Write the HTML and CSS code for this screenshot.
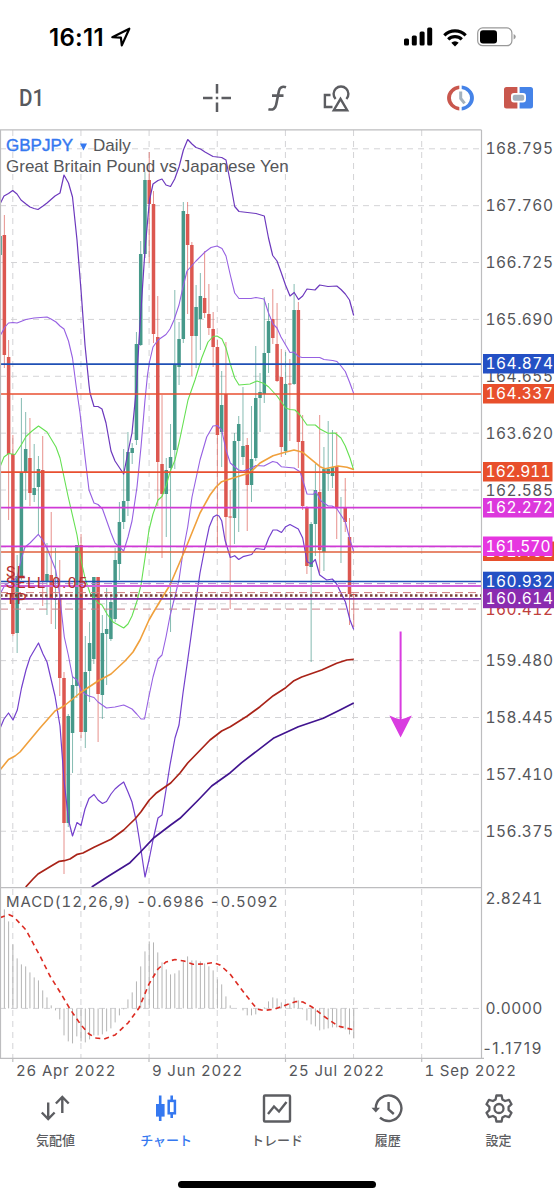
FILE: index.html
```html
<!DOCTYPE html>
<html lang="ja">
<head>
    <meta charset="UTF-8">
    <meta name="viewport" content="width=device-width, initial-scale=1.0">
    <title>GBPJPY Daily</title>
    <link rel="stylesheet" href="styles.css">
</head>
<body>

    <!-- Status bar -->
    <div class="status-bar">
        <div class="status-left">
            <span class="time">16:11</span>
            <svg class="location" width="20" height="20" viewBox="0 0 20 20">
                <path d="M1.3 10.2 L18.3 1.7 L10.8 18.4 L9.9 10.6 Z" fill="none" stroke="#000" stroke-width="2.2" stroke-linejoin="round"/>
            </svg>
        </div>
        <div class="status-right">
            <svg width="29" height="20" viewBox="0 0 29 20">
                <rect x="0" y="11.5" width="5" height="7" rx="1.5"/>
                <rect x="7.8" y="8.5" width="5" height="10" rx="1.5"/>
                <rect x="15.6" y="4.5" width="5" height="14" rx="1.5"/>
                <rect x="23.2" y="0.5" width="5" height="18" rx="1.5"/>
            </svg>
            <svg width="24" height="19" viewBox="0 0 24 19">
                <g fill="none" stroke="#000" stroke-width="3.1">
                    <path d="M1.3 7.3 A15.2 15.2 0 0 1 22.7 7.3"/>
                    <path d="M5.2 11.4 A9.6 9.6 0 0 1 18.8 11.4"/>
                </g>
                <path d="M12 18.4 L8.3 14.7 A5.3 5.3 0 0 1 15.7 14.7 Z"/>
            </svg>
            <svg width="40" height="20" viewBox="0 0 40 20">
                <rect x="0.7" y="0.9" width="34.2" height="17.8" rx="5" fill="#fff" stroke="#999" stroke-width="1.2"/>
                <rect x="3" y="3.2" width="17" height="13.2" rx="3"/>
                <path d="M36.6 7 Q38.8 8 38.8 9.8 Q38.8 11.6 36.6 12.6 Z" fill="#999"/>
            </svg>
        </div>
    </div>

    <!-- Toolbar -->
    <div class="toolbar">
        <span class="timeframe">D1</span>
        <div class="tools">
            <svg width="28" height="28" viewBox="0 0 28 28">
                <path d="M14 0 V9.5 M14 18.5 V28 M0 14 H9.5 M18.5 14 H28 M12.8 14 H15.2" stroke="#5c5d61" stroke-width="2.5"/>
            </svg>
            <svg width="20" height="28" viewBox="0 0 20 28">
                <path d="M19 3.2 C15 1.8 12.6 3.6 11.9 7 L9.2 20.5 C8.4 24.6 6 26.4 1.4 25.2 M5 11.6 H16.5" fill="none" stroke="#5c5d61" stroke-width="2.6"/>
            </svg>
            <svg width="27" height="28" viewBox="0 0 27 28">
                <g fill="none" stroke="#5c5d61" stroke-width="2.4">
                    <path d="M12.6 15 A7.4 7.4 0 1 1 23.4 15"/>
                    <path d="M7.5 11 H1.9 V23 H9.5"/>
                    <path d="M17.5 14.8 L24.2 26.2 H10.8 Z"/>
                </g>
            </svg>
        </div>
        <div class="trade-tools">
            <svg width="29" height="26" viewBox="0 0 29 26">
                <path d="M13.3 0.5 A14 12.6 0 0 0 13.3 25.5 V22.1 A9.8 9.2 0 0 1 13.3 3.9 Z" fill="#c9574d"/>
                <path d="M15.7 0.5 A14 12.6 0 0 1 15.7 25.5 V22.1 A9.8 9.2 0 0 0 15.7 3.9 Z" fill="#4583e8"/>
                <path d="M14.7 6.5 V13.4 L18.6 18.4" fill="none" stroke="#a4b2be" stroke-width="3"/>
            </svg>
            <svg width="29" height="22" viewBox="0 0 29 22">
                <path d="M2.5 0 H13.4 V6 H10 Q7 6 7 9 V12 Q7 15.5 10 15.5 H13.4 V21.5 H2.5 Q0 21.5 0 19 V2.5 Q0 0 2.5 0" fill="#c9574d"/>
                <path d="M26.5 0 H15.6 V6 H19 Q22 6 22 9 V12 Q22 15.5 19 15.5 H15.6 V21.5 H26.5 Q29 21.5 29 19 V2.5 Q29 0 26.5 0" fill="#4583e8"/>
                <rect x="8.8" y="7.8" width="11.4" height="6" rx="2" fill="#a4b2be"/>
            </svg>
        </div>
    </div>

    <!-- Chart -->
    <svg class="chart" viewBox="0 129 554 956">
        <defs>
            <clipPath id="plot"><rect x="0" y="130" width="481" height="757"/></clipPath>
        </defs>
        <g id="grid" class="grid"></g>
        <g clip-path="url(#plot)">
            <g id="candles"></g>
            <g id="curves" class="curves"></g>
            <g id="levels"></g>
        </g>
        <g class="order">
            <text x="6" y="577">SL</text>
            <text x="6" y="588">SELL 0.05</text>
            <text x="6" y="604">TP</text>
        </g>

        <g class="arrow">
            <path d="M400.6 631.5 V722" stroke="#d93ce0" stroke-width="2"/>
            <path d="M389.4 715.5 Q396 718.5 400.6 719.5 Q405.2 718.5 411.8 715.5 L400.6 737.5 Z" fill="#d93ce0"/>
        </g>

        <g id="macd"></g>

        <path class="frame" d="M0.5 130 V1058 M0 129.9 H481.5 M481.5 130 V1058 M0 887.6 H481.5 M0 1058.4 H484 M12.8 1058 V1062 M149 1058 V1062 M285.5 1058 V1062 M421.7 1058 V1062"/>

        <g class="title">
            <text x="6" y="151" class="symbol">GBPJPY</text>
            <path d="M80 143.5 H87 L83.5 150.5 Z" fill="#3578f0"/>
            <text x="93" y="151">Daily</text>
            <text x="6" y="172">Great Britain Pound vs Japanese Yen</text>
        </g>
        <text x="6" y="907" class="macd-title">MACD(12,26,9) -0.6986 -0.5092</text>

        <g id="prices" class="axis"></g>
        <g class="axis">
            <text x="485.5" y="903.5">2.8241</text>
            <text x="485.5" y="1014">0.0000</text>
            <text x="483.5" y="1054" class="low">-1.1719</text>
        </g>
        <g class="dates">
            <text x="16" y="1076">26 Apr 2022</text>
            <text x="152" y="1076">9 Jun 2022</text>
            <text x="288.5" y="1076">25 Jul 2022</text>
            <text x="424.5" y="1076">1 Sep 2022</text>
        </g>
    </svg>

    <!-- Tabs -->
    <nav class="tabs">
        <a class="tab">
            <svg width="30" height="30" viewBox="0 0 30 30">
                <path d="M8.2 9.5 V26 M1.8 19.5 L8.2 26 L14.6 19.5 M22.3 20 V4 M15.9 10.5 L22.3 4 L28.7 10.5" fill="none" stroke="currentColor" stroke-width="2.4"/>
            </svg>
            <span>気配値</span>
        </a>
        <a class="tab active">
            <svg width="30" height="30" viewBox="0 0 30 30">
                <path d="M9.2 2.5 V28 M20.7 2.5 V7 M20.7 20 V25" stroke="currentColor" stroke-width="2.6"/>
                <rect x="5" y="11" width="8.6" height="12.6" fill="currentColor"/>
                <rect x="17.7" y="7.9" width="6.2" height="12.4" fill="none" stroke="currentColor" stroke-width="2.5"/>
            </svg>
            <span>チャート</span>
        </a>
        <a class="tab">
            <svg width="30" height="30" viewBox="0 0 30 30">
                <rect x="2" y="2.5" width="26" height="26" rx="1" fill="none" stroke="currentColor" stroke-width="2.4"/>
                <path d="M6 21 L12 13.5 L17 18.5 L24.5 9" fill="none" stroke="currentColor" stroke-width="2.4"/>
            </svg>
            <span>トレード</span>
        </a>
        <a class="tab">
            <svg width="34" height="30" viewBox="0 0 34 30">
                <path d="M4.8 15.5 A12.8 12.8 0 1 1 9 24.7" fill="none" stroke="currentColor" stroke-width="2.4"/>
                <path d="M0.5 14.8 H9 L4.8 19.5 Z" fill="currentColor"/>
                <path d="M17.6 9 V16.5 L22.8 21" fill="none" stroke="currentColor" stroke-width="2.4"/>
            </svg>
            <span>履歴</span>
        </a>
        <a class="tab">
            <svg width="30" height="30" viewBox="0 0 30 30">
                <path fill="none" stroke="currentColor" stroke-width="2.3" stroke-linejoin="round" d="M12.4 2.5 H17.6 L18.4 6.4 L21.1 8 L25 6.8 L27.5 11.2 L24.6 13.9 V17.1 L27.5 19.8 L25 24.2 L21.1 23 L18.4 24.6 L17.6 28.5 H12.4 L11.6 24.6 L8.9 23 L5 24.2 L2.5 19.8 L5.4 17.1 V13.9 L2.5 11.2 L5 6.8 L8.9 8 L11.6 6.4 Z"/>
                <circle cx="15" cy="15.5" r="4.5" fill="none" stroke="currentColor" stroke-width="2.3"/>
            </svg>
            <span>設定</span>
        </a>
    </nav>
    <div class="home-indicator"></div>

    <script src="chart.js"></script>
</body>
</html>
```

FILE: styles.css
```css
body {
    margin: 0;
    height: 1200px;
    display: flex;
    flex-direction: column;
    background-color: #fff;
    color: #58595d;
    font-family: Inter, "Noto Sans CJK JP", sans-serif;
    overflow: hidden;
}

svg {
    display: block;
}

/* Status bar */
.status-bar {
    height: 72px;
    box-sizing: border-box;
    padding: 2px 37px 0 49px;
    display: flex;
    justify-content: space-between;
    align-items: center;
    color: #000;
}

.status-left {
    display: flex;
    align-items: center;
    gap: 7px;
}

.status-right {
    display: flex;
    align-items: center;
    gap: 10px;
}

.time {
    font-size: 24px;
    font-weight: 600;
    letter-spacing: 0.3px;
}

/* Toolbar */
.toolbar {
    height: 57px;
    box-sizing: border-box;
    padding: 0 21px 5px 19px;
    display: flex;
    align-items: center;
}

.timeframe {
    width: 184px;
    font-family: Roboto, sans-serif;
    font-size: 23.5px;
    font-weight: 500;
    transform: scaleX(0.88);
    transform-origin: left;
}

.tools {
    display: flex;
    align-items: center;
    gap: 36px;
}

.trade-tools {
    display: flex;
    align-items: center;
    gap: 29px;
    margin-left: auto;
}

/* Chart */
.chart {
    width: 554px;
    height: 956px;
    flex: none;
}

.chart text {
    fill: #55565a;
    white-space: pre;
}

.grid {
    stroke: #d3d3d6;
    stroke-width: 1;
    stroke-dasharray: 6 5;
}

.frame {
    fill: none;
    stroke: #bdbdbf;
    stroke-width: 1.2;
}

.curves {
    fill: none;
    stroke-linejoin: round;
}

.up {
    fill: #46998a;
    stroke: #46998a;
}

.down {
    fill: #dc5750;
    stroke: #dc5750;
}

.wick {
    stroke-width: 1;
    opacity: 0.65;
}

.body {
    stroke: none;
}

.bar {
    stroke: #b4b4b4;
    stroke-width: 1;
}

.signal {
    fill: none;
    stroke: #dc2b22;
    stroke-width: 1.6;
    stroke-dasharray: 5 4;
}

.chart .title text {
    font-family: "Liberation Sans", Arial, sans-serif;
    font-size: 17px;
}

.chart .title .symbol {
    fill: #3578f0;
    stroke: #3578f0;
    stroke-width: 0.4;
}

.macd-title {
    font-size: 15px;
    font-variant-numeric: tabular-nums;
    letter-spacing: 0.9px;
}

.axis {
    font-size: 15.5px;
    font-variant-numeric: tabular-nums;
    letter-spacing: 0.5px;
}

.axis .low {
    font-variant-numeric: normal;
    letter-spacing: 1.7px;
}

.dates {
    font-size: 15px;
    font-variant-numeric: tabular-nums;
    letter-spacing: 0.8px;
}

.chart .axis .tag {
    fill: #fff;
}

.chart .axis .narrow {
    letter-spacing: 0.1px;
}

.chart .axis .bid {
    fill: #c0403c;
}

.chart .order text {
    fill: #b5302f;
    font-family: Roboto, sans-serif;
    font-size: 15.5px;
    letter-spacing: 1.5px;
}

/* Tabs */
.tabs {
    display: flex;
    height: 96px;
    flex: none;
}

.tab {
    flex: 1;
    display: flex;
    flex-direction: column;
    align-items: center;
    padding-top: 8px;
    color: #5c5d61;
}

.tab span {
    margin-top: 7px;
    font-family: "Noto Sans CJK JP", sans-serif;
    font-size: 13px;
    font-weight: 500;
    line-height: 20px;
}

.tab.active {
    color: #3578f0;
}

.home-indicator {
    width: 198px;
    height: 7px;
    flex: none;
    margin: 0 auto;
    border-radius: 4px;
    background-color: #000;
}
```

FILE: chart.js
```js
const NS = 'http://www.w3.org/2000/svg';
const STEP = 4.261;

function add(parent, tag, attrs, text) {
    const el = document.createElementNS(NS, tag);
    for (const key in attrs) el.setAttribute(key, attrs[key]);
    if (text) el.textContent = text;
    parent.appendChild(el);
    return el;
}

function line(parent, x1, y1, x2, y2, attrs) {
    return add(parent, 'line', Object.assign({ x1, y1, x2, y2 }, attrs));
}

// Grid
const grid = document.getElementById('grid');
for (let i = 0; i < 13; i++) {
    const y = 148.8 + i * 56.87;
    line(grid, 0, y, 484, y);
}
for (let i = 0; i < 7; i++) {
    const x = 12.8 + i * 68.15;
    line(grid, x, 130, x, 1058);
}
line(grid, 0, 1008.4, 484, 1008.4);

// Candles: direction, high, body top, body bottom, low
const candles = [
    ['u', 236, 236, 255, 255], ['d', 215, 235, 355, 368], ['d', 340, 357, 454, 520], ['d', 435, 454, 634, 636],
    ['u', 555, 576, 633, 653], ['u', 398, 472, 576, 580], ['u', 412, 449, 472, 500], ['d', 418, 458, 493, 506],
    ['u', 444, 488, 495, 502], ['u', 456, 469, 487, 535], ['d', 436, 470, 581, 606], ['u', 543, 574, 581, 615],
    ['d', 512, 575, 599, 624], ['u', 548, 599, 600, 629], ['d', 560, 599, 678, 696], ['d', 672, 678, 823, 874],
    ['u', 714, 716, 823, 827], ['u', 676, 685, 733, 773], ['u', 545, 545, 686, 698], ['d', 534, 545, 732, 738],
    ['u', 636, 672, 732, 748], ['u', 622, 643, 671, 702], ['u', 577, 577, 659, 664], ['d', 577, 577, 694, 742],
    ['u', 615, 633, 695, 719], ['u', 588, 629, 634, 685], ['u', 597, 602, 639, 641], ['u', 548, 560, 619, 622],
    ['u', 502, 522, 564, 580], ['u', 449, 501, 522, 529], ['u', 432, 452, 501, 516], ['u', 443, 448, 453, 464],
    ['u', 332, 344, 440, 445], ['u', 241, 254, 345, 346], ['u', 172, 180, 254, 258], ['d', 152, 180, 204, 263],
    ['d', 191, 204, 334, 343], ['d', 296, 337, 462, 506], ['d', 395, 464, 494, 558], ['u', 458, 470, 494, 537],
    ['u', 424, 457, 468, 632], ['u', 290, 364, 450, 469], ['u', 322, 339, 367, 385], ['u', 202, 211, 339, 343],
    ['d', 202, 214, 245, 314], ['d', 242, 245, 336, 376], ['u', 285, 307, 336, 368], ['u', 273, 296, 319, 350],
    ['d', 251, 298, 313, 318], ['d', 284, 314, 328, 335], ['d', 312, 329, 347, 367], ['d', 340, 347, 435, 547],
    ['u', 371, 405, 432, 467], ['d', 342, 394, 517, 547], ['d', 490, 516.5, 517.5, 609], ['u', 433, 441, 518, 544],
    ['u', 416, 424, 441, 532], ['u', 387, 446, 457, 465], ['d', 438, 445, 485, 531], ['u', 406, 459, 485, 502],
    ['u', 346, 398, 458, 461], ['u', 373, 392, 398, 432], ['u', 297, 353, 394, 403], ['u', 303, 321, 353, 373],
    ['d', 289, 319, 338, 344], ['d', 303, 344, 381, 382], ['d', 349, 377, 447, 457], ['u', 352, 384, 451, 455],
    ['d', 359, 383.5, 384.5, 441], ['u', 284, 310, 384, 385], ['d', 302, 310, 442, 468], ['d', 415, 441, 506, 510],
    ['d', 506, 508, 566, 574], ['u', 522, 524, 567, 662], ['u', 464, 490, 524, 556], ['d', 415, 492, 550, 573],
    ['u', 447, 469, 552, 571], ['u', 421, 469, 474, 491], ['u', 430, 467, 476, 488], ['d', 432, 467, 507, 539],
    ['u', 497, 507, 508, 563], ['d', 478, 508, 522, 532], ['d', 518, 537, 594, 625], ['d', 594, 594, 595, 627]
];

const candleGroup = document.getElementById('candles');
candles.forEach(([dir, high, top, bottom, low], i) => {
    const x = i * STEP + 0.1;
    const cls = dir === 'u' ? 'up' : 'down';
    line(candleGroup, x, high, x, low, { class: 'wick ' + cls });
    add(candleGroup, 'rect', { x: x - 1.75, y: top, width: 3.5, height: bottom - top, class: 'body ' + cls });
});

// Bollinger bands and moving averages
const curves = [
    ['#65e052', 1.1, '0,467 4,457 8.7,453.5 15,454.5 21.5,444.5 26,436.5 32,431 38.5,426 47,432 56,447 60,458 68,496 77,535 81,560 85,578 90,593 98,603 102,605 107,614 113,622 123.7,628 128,624 132,616 137,601 141,585 145,558 149,530 153,514 158,500 162,496.5 166,486 170,472 175,460 179,443 188,400 195,380 201.7,358 208,342 213,336.5 217,336 222,339 226,348 230,363 234.7,378 239,385 250,384 257,381 264,383.5 268.7,387 277,396 285.7,408 290,409.5 295,410 300,415 307,425 315.3,425 320,429 328,433.3 335,433 341,438 345.3,446 350,458 353.7,470'],
    ['#9660e2', 1.1, '0,336 5,327 8.5,323 13,322.5 17,323 26,319.5 34,318 47,317 51,319 56,322 60,326 64,329 68.5,341 72.5,358 76,385 80,413 85,457 89,490 94,503 98,504.5 102.5,509 111,533 115,543 123.7,551 128,537 132,521 137,487 141,447 145,400 147.5,375 149.5,362 153,347 158,340 166,334.5 170,329 174,320 179,305 183,287 187,271 196,261 205,252 211,247.5 217,246 222,248.5 226,256 230.3,275 234.7,293 239,298.5 251,298.5 256,297.5 264,299 268.5,313 273,324 277,328 281,337 290,352.5 294,352 298.5,356.5 302,357.5 319.7,357.5 324,359.5 332.7,360.5 337,361.5 341,366 345.3,371.5 349.5,382 353.7,393.5'],
    ['#9660e2', 1.1, '0,594 5,585 10,582 17,578 21.5,558 25,547 30,543 38.3,534.3 42.7,540 47,548 55.7,570 59,590 64.3,637 68.3,655 72.5,676.7 77,680 81,690 85,694 89,696 94,697.5 98,702 106.5,708 115,707 123.7,705 128,707 132,709 136.7,714 141,719 144.5,719 149,696 153,677 158,659 162,655 166,637 170,616 179,580 183.3,550 187.7,527 192,497 200,460 206.7,437 213,426 217.3,425.5 221.7,430 226,450 230.3,463 238.5,470 243,471 251.7,468 256,465.5 264,466 272.7,461.5 277,462.5 281.3,466.7 294,468 300,471.7 302.7,480 307,494 313.5,494.3 315.5,491 321,501 328.3,506 332,506 336.7,508.5 345.3,521.7 350,540 353.7,551.5'],
    ['#6c38bd', 1.2, '0,204 4,196 8.5,193.5 12.7,190.5 17,194 21,200 26,204 30,207 34,208.5 38,209.5 43,206 47,203 51,199.5 55,196 60,193 64,175 68.5,183 72.5,197 77,240 81,290 85,345 89,385 90,393 94,406.5 98,406.5 102,409 106,423 111,451 115,461 119,467 123.7,474 128,452 132,433 136.7,385 139,340 145,250 149.5,200 153,184 158,180.5 162,179 166,185 170.5,186.5 174.7,179 179,167 183.4,150 187.7,139.5 192,144 196,147.5 200.5,149 205,152 213,156.5 221.7,157.5 226,160 230.3,182 234.7,206.5 239,211.5 256,213.5 264.3,216 268.5,238 272.7,255.5 277,261 281,272 285.5,285 290,296 294.2,292.5 298.5,299.5 302.7,296 307,289 315,290 319.7,285 328,286.5 336.8,286 341,289.5 345.3,294 349.5,300 353.7,315.5'],
    ['#7440cd', 1.2, '0,728.5 4,719 8.5,713 13,720 17.3,710 21.5,688 26,670 30,657.5 38.5,643 43,654 47,662 55,696 60,726 64,780 68.5,820 72.5,836 77,822.5 81,825.5 85,809 89,798.5 94,794.5 98,800 102.5,803.5 106.5,801.5 111,794 115,789 119,785.5 123.7,782 128,792 132,802 136.7,823 141,850 145,877 149,860 153,840 158,818 162,815 166,790 170,765 175,738 179,725 183,693 187,665 190.5,640 195,607 200,573 205,547 209.3,526.7 213.3,517 216.7,515 219,516 221.7,520.7 225,540 230.3,557.5 234.7,555.7 238.7,559.5 243,556.7 251.7,554.5 256,548.5 264.3,549.5 268.7,538 273,530 277,530 281.5,532.5 285.7,526.7 290,524.5 298.3,529 302.7,538 307,561.7 311.3,563.7 315.3,559.5 319.7,575 326.7,580 332.3,579 336.7,584 341,593 345.3,601.7 350,620 353.7,629.5'],
    ['#f0a03c', 1.6, '0,770 8.5,759.5 15,756 20,752 40,728 55,711 64,706 80,693 98,681 111,674 125,661 133,652 140,640 149,620 153,613 165,593 170,585 185,550 200,513 210,495 216,487 221.7,481.7 230,479 250,472.7 260,463 273,455.7 285,452.3 294,450 302.7,452.3 310,458.3 320,466.7 325,468.7 338,466 347,467.3 353.7,469.5'],
    ['#a92318', 1.7, '25.7,887 33,879 38,874 50,866.7 59.3,861.3 64.3,860.7 70,859 77.3,854.3 83,853 94,847.3 111,839.3 123.7,830 135,819 141,811.7 149.3,800 156.7,792.7 170.7,783 180,773 187.7,763 210,740 221.7,731 230.3,726.7 247.3,716 260,706.7 273.3,695.7 285.7,687.7 294,680.7 301.7,677 321.7,670 336.7,663.3 346.7,660 353.7,659.3'],
    ['#41148f', 1.7, '91.7,887 106.7,877.3 130,862.7 140,852.5 153.3,838.3 170.7,825 180,818.3 198.3,800 211.7,786 230.3,772.7 241.7,762.7 273.3,738.3 298.3,726.7 323.3,718.3 340,710 353.7,703']
];

const curveGroup = document.getElementById('curves');
curves.forEach(([color, width, points]) => {
    add(curveGroup, 'polyline', { points, stroke: color, 'stroke-width': width });
});

// Horizontal levels: y, color, width, dash
const levels = [
    [364.2, '#1f50b5', 1.7], [394, '#e84f30', 1.7], [472.2, '#e84f30', 1.7],
    [507.6, '#cf3ad6', 1.8], [546.3, '#cf3ad6', 1.8], [552, '#e0603c', 1.7],
    [592.6, '#cf7f80', 1, '8 5'], [609.1, '#c98088', 1, '8 5'],
    [581.5, '#1f50b5', 1.7], [583.6, '#b77fd0', 1, '8 5'], [586, '#d060dc', 1.8],
    [595.5, '#7a4038', 2.4, '2.5 2.5'], [598.8, '#7a2ca5', 1.7]
];

const levelGroup = document.getElementById('levels');
levels.forEach(([y, color, width, dash]) => {
    line(levelGroup, 0, y, 481, y, { stroke: color, 'stroke-width': width, 'stroke-dasharray': dash || 'none' });
});

// Price axis
const prices = document.getElementById('prices');
const labels = ['168.795', '167.760', '166.725', '165.690', '164.655', '163.620', '162.585', '', '', '159.480', '158.445', '157.410', '156.375'];
labels.forEach((label, i) => {
    if (label) add(prices, 'text', { x: 485.5, y: 154.3 + i * 56.87 }, label);
});
add(prices, 'text', { x: 485.5, y: 614.5, class: 'bid' }, '160.412');

// Price tags: label, top, color, width
const tags = [
    ['164.874', 354, '#2450c4', 71], ['164.337', 384, '#e84f2b', 71], ['162.911', 462, '#e84f2b', 69.5],
    ['162.272', 498, '#dc38dc', 71], ['161.461', 541.5, '#e84f2b', 71], ['161.570', 536.5, '#e636e0', 69.5],
    ['160.932', 571.7, '#2450c4', 71], ['160.614', 588.7, '#8a2cb0', 71]
];
tags.forEach(([label, top, color, width]) => {
    add(prices, 'rect', { x: 483, y: top, width, height: 19.5, fill: color });
    add(prices, 'text', { x: 485.5, y: top + 15.4, class: width < 71 ? 'tag narrow' : 'tag' }, label);
});

// MACD histogram, offsets from the zero line
const histogram = [
    101, 99, 87, 64, 50, 44, 42, 36, 31, 28, 18, 11, 3, -2, -11, -27, -33, -35, -28, -33, -34, -31, -27, -27, -26, -23,
    -20, -14, -7, -1, 9, 16, 27, 42, 57, 67, 66, 56, 46, 39, 34, 35, 38, 47, 52, 48, 48, 47, 45, 42, 38, 29, 24, 12, 3,
    0, 0, -2, -7, -7, -6, -2, 1, 7, 11, 10, 6, 4, 5, 11, 8, -1, -12, -16, -18, -22, -21, -20, -19, -19, -20, -21, -26, -30
];
const macd = document.getElementById('macd');
histogram.forEach((value, i) => {
    const x = i * STEP + 0.1;
    line(macd, x, 1008.4, x, 1008.4 - value, { class: 'bar' });
});
add(macd, 'polyline', {
    class: 'signal',
    points: '0,917.7 5,916 9,914.7 14,917 26,930 40,956 50,976 60,992 70,1009 81,1025 89,1034 96,1038 104,1039 115,1035 128,1023 139,1008 149,984 158,969 166,962 175,959.5 184,961 193,964.3 204,964 213,962.5 220,965 230,974 245,994 257,1009 264,1010.5 275,1009 286,1005 296,1001.5 303,1002 312,1007 325,1017 338,1026 354,1030'
});
```
